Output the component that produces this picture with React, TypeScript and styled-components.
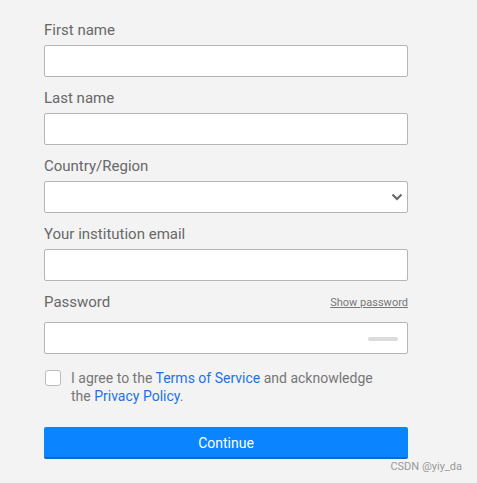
import React from 'react';
import styled, { createGlobalStyle } from 'styled-components';

const GlobalStyle = createGlobalStyle`
  html, body {
    margin: 0;
    padding: 0;
    background: #f3f3f3;
  }
  body {
    font-family: Roboto, "Liberation Sans", Arial, sans-serif;
  }
`;

const Page = styled.div`
  width: 477px;
  height: 483px;
  position: relative;
  background: #f3f3f3;
  box-sizing: border-box;
  padding: 19px 0 0 44px;
`;

const Form = styled.form`
  width: 364px;
  display: flex;
  flex-direction: column;
`;

const Field = styled.div`
  display: flex;
  flex-direction: column;
  margin-bottom: 10px;
`;

const LabelRow = styled.div<{ $gap?: number }>`
  display: flex;
  justify-content: space-between;
  align-items: center;
  margin-bottom: ${(p) => p.$gap ?? 4}px;
`;

const Label = styled.label`
  font-size: 15px;
  line-height: 22px;
  color: #686868;
`;

const ShowLink = styled.a`
  font-size: 11px;
  color: #777;
  text-decoration: underline;
  cursor: pointer;
`;

const InputWrap = styled.div`
  position: relative;
`;

const TextInput = styled.input`
  display: block;
  width: 100%;
  height: 32px;
  box-sizing: border-box;
  border: 1px solid #b5b5b5;
  border-radius: 2px;
  background: #fff;
  padding: 0 10px;
  font-size: 14px;
  outline: none;
`;

const Select = styled.select`
  display: block;
  width: 100%;
  height: 32px;
  box-sizing: border-box;
  border: 1px solid #b5b5b5;
  border-radius: 2px;
  background: #fff;
  appearance: none;
  padding: 0 10px;
  font-size: 14px;
  outline: none;
`;

const Chevron = styled.svg`
  position: absolute;
  right: 5px;
  top: 12px;
  pointer-events: none;
`;

const KeyPill = styled.span`
  position: absolute;
  right: 10px;
  top: 15px;
  width: 30px;
  height: 4px;
  border-radius: 2px;
  background: #dcdcdc;
`;

const AgreeRow = styled.div`
  display: flex;
  align-items: flex-start;
  margin-top: 5px;
`;

const Box = styled.span`
  flex: none;
  width: 16px;
  height: 16px;
  box-sizing: border-box;
  border: 1px solid #bcbcbc;
  border-radius: 3px;
  background: #fff;
  margin: 1px 10px 0 1px;
`;

const AgreeText = styled.p`
  margin: 0;
  max-width: 310px;
  font-size: 14px;
  line-height: 18px;
  color: #777;
`;

const Link = styled.a`
  color: #1a73e8;
  text-decoration: none;
`;

const Button = styled.button`
  margin-top: 22px;
  width: 364px;
  height: 32px;
  border: none;
  border-bottom: 2px solid #0a6bd4;
  border-radius: 2px;
  background: #0a84ff;
  color: #fff;
  font-family: Roboto, "Liberation Sans", Arial, sans-serif;
  font-size: 14px;
  padding: 2px 0 0;
  cursor: pointer;
`;

const Watermark = styled.span`
  position: absolute;
  right: 15px;
  bottom: 10px;
  font-size: 11px;
  color: #999;
`;

export default function App() {
  return (
    <>
      <GlobalStyle />
      <Page>
        <Form onSubmit={(e) => e.preventDefault()}>
          <Field>
            <LabelRow>
              <Label>First name</Label>
            </LabelRow>
            <TextInput type="text" />
          </Field>
          <Field>
            <LabelRow>
              <Label>Last name</Label>
            </LabelRow>
            <TextInput type="text" />
          </Field>
          <Field>
            <LabelRow>
              <Label>Country/Region</Label>
            </LabelRow>
            <InputWrap>
              <Select defaultValue="">
                <option value=""></option>
              </Select>
              <Chevron width="12" height="8" viewBox="0 0 12 8">
                <path d="M1.5 1.5 L6 6 L10.5 1.5" fill="none" stroke="#666" strokeWidth="2" />
              </Chevron>
            </InputWrap>
          </Field>
          <Field>
            <LabelRow>
              <Label>Your institution email</Label>
            </LabelRow>
            <TextInput type="email" />
          </Field>
          <Field>
            <LabelRow $gap={9}>
              <Label>Password</Label>
              <ShowLink>Show password</ShowLink>
            </LabelRow>
            <InputWrap>
              <TextInput type="password" />
              <KeyPill />
            </InputWrap>
          </Field>
          <AgreeRow>
            <Box />
            <AgreeText>
              I agree to the <Link>Terms of Service</Link> and acknowledge the{' '}
              <Link>Privacy Policy</Link>.
            </AgreeText>
          </AgreeRow>
          <Button type="submit">Continue</Button>
        </Form>
        <Watermark>CSDN @yiy_da</Watermark>
      </Page>
    </>
  );
}
